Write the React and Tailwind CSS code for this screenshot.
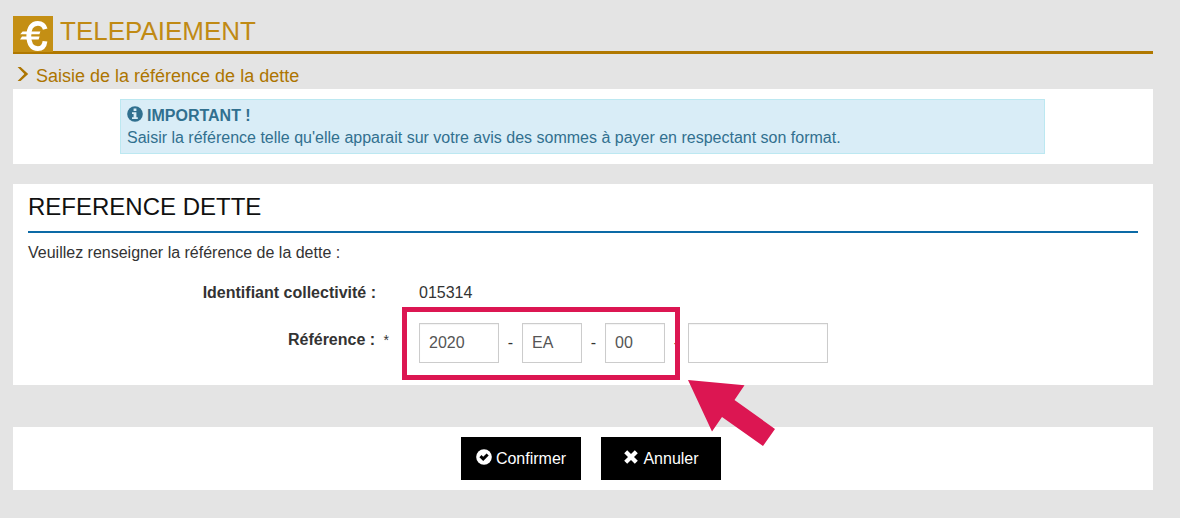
import { useState } from "react";

const FIELD_CLASS =
  "h-10 border border-[#ccc] bg-white px-[9px] text-base text-[#555] shadow-[inset_0_1px_1px_rgba(0,0,0,0.05)] outline-none";

const BUTTON_CLASS =
  "flex h-[43px] w-[120px] items-center justify-center gap-1 bg-black text-base text-white";

const REFERENCE_PARTS = [
  { name: "annee", label: "Année", width: "w-20" },
  { name: "code", label: "Code", width: "w-[60px]" },
  { name: "periode", label: "Période", width: "w-[60px]" },
  { name: "numero", label: "Numéro", width: "w-[140px]" },
];

function EuroIcon() {
  return (
    <svg
      viewBox="0 0 40 36"
      className="relative -mb-px h-9 w-10 shrink-0 bg-[#c48f14]"
      aria-hidden="true"
    >
      <path
        d="M32.2 13.2C31.2 9.4 28.4 7.4 24.8 7.4C19.2 7.4 15.8 12 15.8 20C15.8 28 19.2 32.6 24.8 32.6C28.8 32.6 31.4 30 32 25.2"
        fill="none"
        stroke="#fff"
        strokeWidth="4.8"
      />
      <path
        d="M9.6 15.4H27.4L26.4 18.2H7.2ZM9 20.6H26.6L25.6 23.4H7Z"
        fill="#fff"
      />
    </svg>
  );
}

function ChevronIcon() {
  return (
    <svg viewBox="0 0 12 16" className="mb-1 h-4 w-3 fill-[#ad7500]" aria-hidden="true">
      <path d="M0.6 1H3.6L11.2 8L3.6 15H0.6L7.4 8Z" />
    </svg>
  );
}

function InfoIcon() {
  return (
    <svg viewBox="0 0 16 16" className="mb-1 h-4 w-4" aria-hidden="true">
      <circle cx="8" cy="8" r="7.8" fill="#31708f" />
      <path
        d="M6.6 2.6H9.4V4.9H6.6ZM5 6.3H9.4V11.2H10.8V12.9H5V11.2H6.6V8H5Z"
        fill="#d9edf7"
      />
    </svg>
  );
}

function CheckIcon() {
  return (
    <svg viewBox="0 0 16 16" className="mb-1 h-4 w-4" aria-hidden="true">
      <circle cx="8" cy="8" r="7.8" fill="#fff" />
      <path d="M3.4 8.2L5.5 6.1L7.2 7.8L10.6 4.4L12.7 6.5L7.2 12Z" fill="#000" />
    </svg>
  );
}

function CrossIcon() {
  return (
    <svg viewBox="-1 -1 16 16" className="mb-1 h-4 w-4" aria-hidden="true">
      <path
        d="M3.2 0.2L7 4L10.8 0.2L13.8 3.2L10 7L13.8 10.8L10.8 13.8L7 10L3.2 13.8L0.2 10.8L4 7L0.2 3.2Z"
        fill="#fff"
      />
    </svg>
  );
}

function Highlight() {
  return (
    <>
      <div className="pointer-events-none absolute -top-4 -left-[17px] h-[73px] w-[278px] border-5 border-[#dc1652]" />
      <svg
        viewBox="0 0 88 68"
        className="pointer-events-none absolute top-[57px] left-[269px] z-10 h-[68px] w-[88px]"
        aria-hidden="true"
      >
        <path d="M0 0L56.5 5.3L46.5 20L87 49L75 66L34 37L24 51.5Z" fill="#dc1652" />
      </svg>
    </>
  );
}

export default function App() {
  const [reference, setReference] = useState({
    annee: "2020",
    code: "EA",
    periode: "00",
    numero: "",
  });

  function handleChange(e) {
    setReference({ ...reference, [e.target.name]: e.target.value });
  }

  return (
    <div className="min-h-screen bg-[#e4e4e4] pt-4 pr-[27px] pb-7 pl-[13px] font-['Liberation_Sans',Arial,sans-serif] text-base leading-[22px] text-[#333]">
      <header className="flex items-start gap-[7px] border-b-3 border-[#b07800]">
        <EuroIcon />
        <h1 className="text-[26px] leading-[30px] text-[#c08a14]">TELEPAIEMENT</h1>
      </header>

      <h2 className="flex h-[35px] items-center gap-[7px] pt-2 pl-1 text-lg text-[#ad7500]">
        <ChevronIcon />
        Saisie de la référence de la dette
      </h2>

      <section className="bg-white py-2.5">
        <div className="mr-[108px] ml-[107px] border border-[#bce8f1] bg-[#d9edf7] px-1.5 pt-[5px] pb-1 text-[#31708f]">
          <p className="flex items-center gap-1 font-bold">
            <InfoIcon />
            IMPORTANT !
          </p>
          <p>
            Saisir la référence telle qu'elle apparait sur votre avis des sommes à payer en
            respectant son format.
          </p>
        </div>
      </section>

      <form onSubmit={(e) => e.preventDefault()}>
        <section className="mt-5 bg-white px-[15px] pt-2.5 pb-[22px]">
          <h3 className="border-b-2 border-[#0c6aa6] pb-[11px] text-2xl leading-[26px] text-[#111]">
            REFERENCE DETTE
          </h3>
          <p className="mt-[9px]">Veuillez renseigner la référence de la dette :</p>

          <div className="mt-[18px] grid grid-cols-[361px_1fr] gap-x-[30px] gap-y-[19px]">
            <div className="pr-[13px] text-right font-bold">Identifiant collectivité :</div>
            <div>015314</div>

            <label htmlFor="annee" className="pt-1.5 text-right font-bold">
              Référence : <span className="ml-1 text-sm font-normal">*</span>
            </label>
            <div className="relative flex items-center">
              {REFERENCE_PARTS.map((part, i) => (
                <div key={part.name} className="flex items-center">
                  {i > 0 && <span className="w-[23px] text-center">-</span>}
                  <input
                    id={part.name}
                    name={part.name}
                    type="text"
                    aria-label={part.label}
                    value={reference[part.name]}
                    onChange={handleChange}
                    className={`${FIELD_CLASS} ${part.width}`}
                  />
                </div>
              ))}
              <Highlight />
            </div>
          </div>
        </section>

        <section className="mt-[42px] flex justify-center gap-5 bg-white py-2.5 pl-4">
          <button type="submit" className={BUTTON_CLASS}>
            <CheckIcon />
            Confirmer
          </button>
          <button type="button" className={BUTTON_CLASS}>
            <CrossIcon />
            Annuler
          </button>
        </section>
      </form>
    </div>
  );
}
